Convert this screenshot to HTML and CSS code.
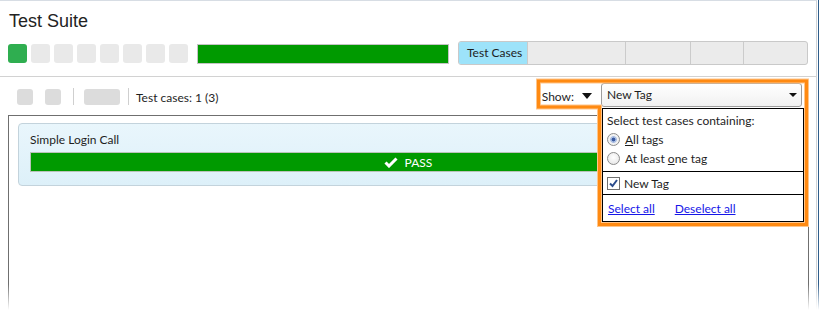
FILE: index.html
```html
<!DOCTYPE html>
<html>
<head>
<meta charset="utf-8">
<title>Test Suite</title>
<link rel="stylesheet" href="styles.css">
</head>
<body>
<div class="frame">
  <div class="app">
    <header class="suite-head">
      <h1 class="suite-title">Test Suite</h1>
      <div class="suite-row">
        <div class="tiles">
          <span class="tile tile-on"></span>
          <span class="tile"></span>
          <span class="tile"></span>
          <span class="tile"></span>
          <span class="tile"></span>
          <span class="tile"></span>
          <span class="tile"></span>
          <span class="tile"></span>
        </div>
        <div class="progress"></div>
        <div class="tabs">
          <span class="tab tab-active">Test Cases</span>
          <span class="tab tab-w98"></span>
          <span class="tab tab-w65"></span>
          <span class="tab tab-w53"></span>
          <span class="tab tab-fill"></span>
        </div>
      </div>
    </header>

    <div class="toolbar">
      <span class="tb-btn"></span>
      <span class="tb-btn tb-gap"></span>
      <span class="tb-sep"></span>
      <span class="tb-btn tb-wide"></span>
      <span class="tb-sep tb-sep-2"></span>
      <span class="tb-count">Test cases: 1 (3)</span>
      <div class="show">
        <span class="show-label">Show:</span>
        <svg class="show-caret" width="10" height="6" viewBox="0 0 10 6"><path d="M0 0H10L5 6Z" fill="#111"/></svg>
        <div class="select">
          <span class="select-value">New Tag</span>
          <svg class="select-caret" width="8" height="4" viewBox="0 0 8 4"><path d="M0 0H8L4 4Z" fill="#111"/></svg>
        </div>
      </div>
    </div>

    <div class="cases">
      <div class="case">
        <div class="case-name">Simple Login Call</div>
        <div class="case-bar">
          <svg width="14" height="11" viewBox="0 0 14 11"><path d="M1.5 5.5L5 9L12.5 1.5" fill="none" stroke="#fff" stroke-width="3"/></svg>
          <span>PASS</span>
        </div>
      </div>
    </div>
  </div>
  <div class="edge"></div>

  <div class="dropdown">
    <div class="dd-head">Select test cases containing:</div>
    <div class="dd-opts">
      <label class="dd-opt"><span class="radio radio-on"></span><span><u>A</u>ll tags</span></label>
      <label class="dd-opt"><span class="radio"></span><span>At least <u>o</u>ne tag</span></label>
    </div>
    <div class="dd-tags">
      <span class="check">
        <svg width="11" height="11" viewBox="0 0 11 11"><path d="M2 5.5L4.5 8L9 2" fill="none" stroke="#2b4c8c" stroke-width="2"/></svg>
      </span>
      <span>New Tag</span>
    </div>
    <div class="dd-links">
      <a class="dd-link" href="#">Select all</a>
      <a class="dd-link" href="#">Deselect all</a>
    </div>
  </div>

  <svg class="highlight" width="819" height="310" viewBox="0 0 819 310">
    <path d="M538.5 81H806.5V224.5H599.5V107H538.5Z" fill="none" stroke="#ffc58a" stroke-width="5"/>
    <path d="M538.5 81H806.5V224.5H599.5V107H538.5Z" fill="none" stroke="#ff8a12" stroke-width="3"/>
  </svg>

  <div class="fade"></div>
</div>
</body>
</html>
```

FILE: styles.css
```css
* { box-sizing: border-box; }
html, body { margin: 0; padding: 0; }
body {
  width: 819px;
  height: 310px;
  overflow: hidden;
  background: #fff;
  font-family: Lato, "Open Sans", sans-serif;
  font-size: 12px;
  color: #1e1e1e;
}
.frame { position: relative; display: flex; width: 819px; height: 310px; }
.app {
  flex: none;
  width: 817px;
  height: 310px;
  border-top: 1px solid #d7dde4;
  border-right: 1px solid #cfd3d7;
}
.edge { flex: none; width: 2px; border-right: 1px solid #2f5d8a; }

/* header */
.suite-head { padding: 10px 0 11px 8px; border-bottom: 1px solid #d2d2d2; }
.suite-title {
  margin: 0 0 0 1px;
  font: 400 18px/20px "Liberation Sans", Arial, sans-serif;
  color: #222;
}
.suite-row { display: flex; align-items: flex-start; margin-top: 10px; height: 24px; }
.tiles { display: flex; gap: 4px; margin-top: 3px; }
.tile { width: 19px; height: 19px; border-radius: 3px; background: #e9e9e9; }
.tile-on { background: #2fae50; }
.progress { width: 252px; height: 20px; margin: 3px 0 0 9px; background: #009a00; border: 1px solid #c4c4c4; }
.tabs {
  display: flex;
  margin-left: 9px;
  width: 350px;
  height: 24px;
  border: 1px solid #c9c9c9;
  border-radius: 3px;
  overflow: hidden;
  background: #ebebeb;
}
.tab { height: 100%; border-left: 1px solid #cbcbcb; flex: none; }
.tab-active { border-left: 0; width: 68px; background: #9de3fa; padding-left: 8px; line-height: 22px; white-space: nowrap; }
.tab-w98 { width: 98px; }
.tab-w65 { width: 65px; }
.tab-w53 { width: 53px; }
.tab-fill { flex: 1; }

/* toolbar */
.toolbar { display: flex; align-items: flex-start; height: 30px; padding: 0 14px 0 17px; }
.tb-btn { width: 16px; height: 16px; border-radius: 3px; background: #dcdcdc; margin-top: 12px; }
.tb-gap { margin-left: 12px; }
.tb-wide { width: 36px; }
.tb-sep { width: 1px; height: 17px; background: #cfcfcf; margin: 11px 10px 0 12px; }
.tb-sep-2 { margin: 11px 7px 0 8px; }
.tb-count { margin-top: 13px; line-height: 16px; }
.show { margin-left: auto; display: flex; align-items: center; margin-top: 6px; height: 24px; }
.show-label { line-height: 16px; margin-top: 3px; }
.show-caret { margin: 1px 9px 0 8px; }
.select {
  width: 201px;
  height: 24px;
  border: 1px solid #9d9d9d;
  border-radius: 3px;
  background: linear-gradient(#ffffff, #f1f1f1);
  display: flex;
  align-items: center;
  padding: 0 4px 0 5px;
}
.select-value { flex: 1; line-height: 16px; }

/* cases */
.cases {
  margin: 8px 0 0 8px;
  width: 801px;
  height: 200px;
  border: 1px solid #6f6f6f;
  padding: 7px 10px 0 9px;
}
.case {
  border: 1px solid #c3d3dc;
  border-radius: 4px;
  background: linear-gradient(#e9f6fc, #ddf0f9);
  padding: 8px 11px 13px;
}
.case-name { line-height: 16px; }
.case-bar {
  margin-top: 4px;
  height: 20px;
  background: #009a00;
  border: 1px solid #b9c3b9;
  display: flex;
  align-items: center;
  justify-content: center;
  gap: 7px;
  color: #fff;
}

/* dropdown menu */
.dropdown {
  position: absolute;
  left: 602px;
  top: 108px;
  width: 202px;
  height: 114px;
  background: #fff;
  border: 1px solid #000;
  box-shadow: 2px 2px 3px rgba(0, 0, 0, 0.25);
}
.dd-head { padding: 4px 4px 0; line-height: 16px; }
.dd-opts { padding: 1px 4px 3px; border-bottom: 1px solid #000; }
.dd-opt { display: flex; align-items: center; gap: 5px; height: 19px; }
.radio {
  width: 13px;
  height: 13px;
  border-radius: 50%;
  border: 1px solid #8c8c8c;
  background: radial-gradient(circle at 50% 40%, #ffffff, #e2e2e2);
}
.radio-on {
  background: radial-gradient(circle, #3a5aa0 0 1.6px, #a9bde2 2.2px 3px, #f2f2f2 3.8px);
}
.dd-tags {
  height: 23px;
  border-bottom: 1px solid #000;
  padding: 0 4px;
  display: flex;
  align-items: center;
  gap: 4px;
}
.check {
  width: 13px;
  height: 13px;
  border: 1px solid #707070;
  display: flex;
  align-items: center;
  justify-content: center;
  background: #fff;
}
.dd-links { display: flex; align-items: center; gap: 20px; height: 26px; padding: 0 5px; }
.dd-link { color: #1616e8; text-decoration: underline; }

.highlight { position: absolute; left: 0; top: 0; pointer-events: none; }
.fade {
  position: absolute;
  left: 0;
  bottom: 0;
  width: 819px;
  height: 26px;
  background: linear-gradient(rgba(255, 255, 255, 0), #fff);
  pointer-events: none;
}
```
